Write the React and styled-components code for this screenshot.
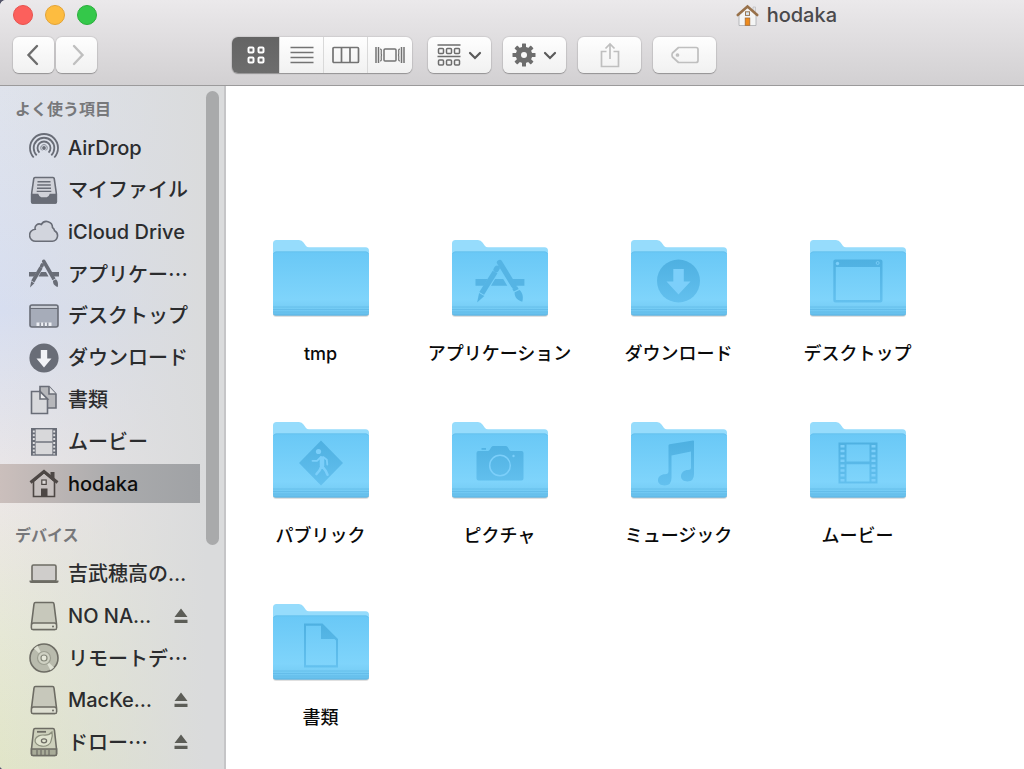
import React from "react";
import styled, { createGlobalStyle } from "styled-components";

const GlobalStyle = createGlobalStyle`
  * {
    box-sizing: border-box;
  }
  body {
    margin: 0;
    background: #55566a;
    font-family: Inter, "Noto Sans CJK JP", sans-serif;
    color: #1f2023;
  }
  svg {
    display: block;
    flex: none;
  }
`;

const Window = styled.div`
  min-height: 100vh;
  display: flex;
  flex-direction: column;
  border-radius: 6px 0 0 4px;
  overflow: hidden;
  background: #fff;
`;

const Header = styled.header`
  background: linear-gradient(to bottom, #ebe9eb, #d2d0d2);
  border-bottom: 1px solid #9b9a9b;
`;

const TitleBar = styled.div`
  display: flex;
  align-items: center;
  justify-content: space-between;
  height: 30px;
  padding: 0 187px 0 13px;
`;

const Lights = styled.div`
  display: flex;
  gap: 12px;
`;

const Light = styled.button`
  width: 20px;
  height: 20px;
  padding: 0;
  border-radius: 50%;
  border: 1px solid ${({ $edge }) => $edge};
  background: ${({ $color }) => $color};
`;

const Title = styled.h1`
  display: flex;
  align-items: center;
  gap: 8px;
  margin: 0;
  font-size: 20px;
  font-weight: 500;
  line-height: 30px;
  color: #4a494c;
`;

const Toolbar = styled.div`
  display: flex;
  align-items: center;
  gap: 12px;
  padding: 7px 13px 12px;
`;

const NavGroup = styled.div`
  display: flex;
  gap: 2px;
  margin-right: 123px;
`;

const ViewGroup = styled.div`
  display: flex;
  margin-right: 4px;
  border-radius: 6px;
  overflow: hidden;
  box-shadow: 0 0 1px 1px rgba(0, 0, 0, 0.08), 0 1px 1px rgba(0, 0, 0, 0.25);
`;

const ToolButton = styled.button`
  display: flex;
  align-items: center;
  justify-content: center;
  gap: 7px;
  width: ${({ $nav }) => ($nav ? "41px" : "63px")};
  height: 36px;
  padding: 0;
  border: 0;
  border-radius: 6px;
  background: linear-gradient(to bottom, #fefefe, #f1f1f1);
  box-shadow: 0 0 1px 1px rgba(0, 0, 0, 0.08), 0 1px 1px rgba(0, 0, 0, 0.25);
  color: ${({ disabled }) => (disabled ? "#bfbfbf" : "#6d6d6d")};
`;

const ViewButton = styled(ToolButton)`
  width: ${({ $active }) => ($active ? "48px" : "44px")};
  border-radius: 0;
  box-shadow: none;
  border-right: ${({ $last }) => ($last ? "0" : "1px solid #d9d9d9")};
  background: ${({ $active }) =>
    $active ? "linear-gradient(to bottom, #646464, #6d6d6d)" : "linear-gradient(to bottom, #fefefe, #f1f1f1)"};
  color: ${({ $active }) => ($active ? "#fff" : "#737373")};
`;

const Body = styled.div`
  display: flex;
  flex: 1;
`;

const Sidebar = styled.aside`
  display: flex;
  flex: none;
  border-right: 2px solid #c5c5c7;
  background: linear-gradient(to right, rgba(217, 218, 220, 0), #dadbdc 92%),
    linear-gradient(to bottom, #dfe3ec, #d7def0 33%, #ece7e6 60%, #e6e8d6 80%, #e1e5c8);
`;

const SideNav = styled.nav`
  display: flex;
  flex-direction: column;
  gap: 20px;
  width: 200px;
  padding-top: 11px;
`;

const SectionTitle = styled.h2`
  margin: 0;
  padding: 0 0 7px 15px;
  font-size: 16px;
  font-weight: 700;
  line-height: 24px;
  color: #77787b;
`;

const SideList = styled.ul`
  display: flex;
  flex-direction: column;
  gap: 3px;
  margin: 0;
  padding: 0;
  list-style: none;
`;

const SideRow = styled.li`
  display: flex;
  align-items: center;
  height: 39px;
  padding: 0 12px 0 29px;
  background: ${({ $selected }) => ($selected ? "linear-gradient(to right, #cbbfbc, #a9aaac 60%, #a0a2a5)" : "none")};
`;

const SideLink = styled.a`
  display: flex;
  flex: 1;
  align-items: center;
  gap: 9px;
  white-space: nowrap;
  text-decoration: none;
  font-family: ${({ $kana }) => ($kana ? '"Noto Sans CJK JP", Inter, sans-serif' : "inherit")};
  font-size: 20px;
  font-weight: 500;
  line-height: 30px;
  color: ${({ $selected }) => ($selected ? "#0d0d0d" : "#2b2c2e")};

  svg {
    color: ${({ $tone }) => $tone};
  }
`;

const EjectButton = styled.button`
  padding: 0;
  border: 0;
  background: none;
  color: #5c5d57;
`;

const ScrollTrack = styled.div`
  display: grid;
  grid-template-rows: 67fr 33fr;
  width: 24px;
  padding: 5px 5px 0 6px;
`;

const ScrollThumb = styled.div`
  border-radius: 7px;
  background: #a9aaab;
`;

const Files = styled.main`
  flex: 1;
  display: grid;
  grid-template-columns: repeat(auto-fill, 179px);
  align-content: start;
  row-gap: 55px;
  padding: 153px 0 20px 5px;
`;

const FileLink = styled.a`
  display: flex;
  flex-direction: column;
  align-items: center;
  gap: 21px;
  text-decoration: none;
  font-size: 18px;
  font-weight: 500;
  line-height: 24px;
  color: #0a0a0a;
`;

/* toolbar icons */

const Back = () => (
  <svg width="16" height="22" viewBox="0 0 16 22" fill="none" stroke="currentColor" strokeWidth="2.4" strokeLinecap="round">
    <path d="M11 2 2.500 11 11 20" />
  </svg>
);

const Forward = () => (
  <svg width="16" height="22" viewBox="0 0 16 22" fill="none" stroke="currentColor" strokeWidth="2.4" strokeLinecap="round">
    <path d="M5 2 13.500 11 5 20" />
  </svg>
);

const IconView = () => (
  <svg width="18" height="18" viewBox="0 0 18 18" fill="none" stroke="currentColor" strokeWidth="2">
    <rect x="1.500" y="1.500" width="5" height="5" rx="1" />
    <rect x="11.500" y="1.500" width="5" height="5" rx="1" />
    <rect x="1.500" y="11.500" width="5" height="5" rx="1" />
    <rect x="11.500" y="11.500" width="5" height="5" rx="1" />
  </svg>
);

const ListView = () => (
  <svg width="24" height="18" viewBox="0 0 24 18" stroke="currentColor" strokeWidth="1.600">
    <path d="M0.500 1.500h23M0.500 6.500h23M0.500 11.500h23M0.500 16.500h23" />
  </svg>
);

const ColumnView = () => (
  <svg width="28" height="18" viewBox="0 0 28 18" fill="none" stroke="currentColor" strokeWidth="1.700">
    <rect x="1" y="1.500" width="25.500" height="15" rx="1" />
    <path d="M9.500 1.500v15M18 1.500v15" />
  </svg>
);

const CoverView = () => (
  <svg width="30" height="18" viewBox="0 0 30 18" fill="none" stroke="currentColor" strokeWidth="1.500">
    <path d="M1 1v16M3.500 1v16M26.500 1v16M29 1v16" />
    <path d="M5 3c2.500 0 .5 3 1.500 6-1 3 1 6-1.500 6M25 3c-2.500 0-.5 3-1.500 6 1 3-1 6 1.500 6" strokeWidth="1.200" />
    <rect x="9" y="3" width="12" height="12" rx="1" />
  </svg>
);

const ArrangeIcon = () => (
  <svg width="24" height="23" viewBox="0 0 24 23" fill="none" stroke="currentColor" strokeWidth="1.500">
    <path d="M0.500 1h23M0.500 12.500h23" />
    {[1.5, 9.5, 17.5].map((x) => (
      <g key={x}>
        <rect x={x} y="4.500" width="5" height="5" rx="1" />
        <rect x={x} y="16" width="5" height="5" rx="1" />
      </g>
    ))}
  </svg>
);

const Chevron = () => (
  <svg width="14" height="9" viewBox="0 0 14 9" fill="none" stroke="#5a5a5a" strokeWidth="2.200" strokeLinecap="round">
    <path d="M2 2 7 7 12 2" />
  </svg>
);

const Gear = () => (
  <svg width="24" height="24" viewBox="0 0 24 24">
    <g fill="currentColor">
      {[0, 45, 90, 135].map((angle) => (
        <rect key={angle} x="10" y="0.500" width="4" height="23" rx="0.500" transform={`rotate(${angle} 12 12)`} />
      ))}
      <circle cx="12" cy="12" r="8.300" />
    </g>
    <circle cx="12" cy="12" r="3" fill="#f8f8f8" />
  </svg>
);

const ShareIcon = () => (
  <svg width="20" height="26" viewBox="0 0 20 26" fill="none" stroke="currentColor" strokeWidth="1.700">
    <path d="M6.500 9.500H1.500v15h17v-15H13.500M10 17V2M5.500 6.500 10 2l4.500 4.500" />
  </svg>
);

const TagIcon = () => (
  <svg width="28" height="18" viewBox="0 0 28 18" fill="none" stroke="currentColor" strokeWidth="1.700" strokeLinejoin="round">
    <path d="M7.500 1.500H25a2 2 0 0 1 2 2v11a2 2 0 0 1-2 2H7.500L1.500 11q-1-2 0-4z" />
    <circle cx="6.500" cy="9" r="1" />
  </svg>
);

const HomeColor = () => (
  <svg width="23" height="23" viewBox="0 0 23 23">
    <path d="M17 3h2.500v5L17 6z" fill="#e5e5e8" stroke="#b3b3b5" strokeWidth="0.600" />
    <path d="M3 10 11.500 2.500 20 10v11.500H3z" fill="#f4f5f5" stroke="#a9abae" strokeWidth="0.800" />
    <path d="M1.800 11 11.500 2.500 21.200 11" fill="none" stroke="#98714a" strokeWidth="2.600" strokeLinecap="round" />
    <rect x="9.500" y="7.800" width="4" height="3.600" fill="#dbe9f2" stroke="#987654" />
    <rect x="9.200" y="14" width="4.600" height="7.300" fill="#ee8a1b" stroke="#a66b34" strokeWidth="0.800" />
  </svg>
);

/* sidebar icons */

const SideSvg = ({ children }) => (
  <svg width="30" height="30" viewBox="0 0 30 30" fill="none" stroke="currentColor" strokeWidth="1.600">
    {children}
  </svg>
);

const AirDropIcon = () => (
  <SideSvg>
    <g strokeWidth="1.800">
      <path d="M4.700 24.500A14 14 0 1 1 25.300 24.500" />
      <path d="M7.700 22.300A10.300 10.300 0 1 1 22.300 22.300" />
      <path d="M10.400 19.600A6.500 6.500 0 1 1 19.600 19.600" />
      <path d="M13.200 17.500A3.200 3.200 0 1 1 16.800 17.500" strokeWidth="0.800" />
    </g>
    <circle cx="15" cy="15" r="1.900" fill="currentColor" stroke="none" />
  </SideSvg>
);

const AllFilesIcon = () => (
  <SideSvg>
    <path d="M6 2.500h18q1 0 1.200 1L27.300 18v9q0 1-1 1H3.700q-1 0-1-1v-9L4.800 3.500q.2-1 1.200-1z" fill="#d0d2d9" />
    <path d="M2.700 19.500h6q1 3.500 3.500 3.500h5.600q2.500 0 3.500-3.500h6V27q0 1-1 1H3.700q-1 0-1-1z" fill="currentColor" />
    <path d="M8.500 6.800h13M8.200 10h13.600M8 13.200h14M7.700 16.400h14.600" strokeWidth="1.400" />
  </SideSvg>
);

const CloudIcon = () => (
  <SideSvg>
    <path
      d="M7 24.300h16.300a5.600 5.600 0 0 0 2.300-10.500A4.700 4.700 0 0 0 23.500 10.500 6 6 0 0 0 12.300 7.500 4.200 4.200 0 0 0 6.200 12.300 6 6 0 0 0 7 24.300z"
      fill="#d2d5dd"
    />
  </SideSvg>
);

// ruler, pencil and brush crossed into an A
const AppGlyph = ({ fill, thickness }) => (
  <>
    <path d="M0 13h7.500l-2.500 4.500H0zM12 13h5l2.500 4.500H9.500zM22.500 13H30v4.500h-5z" fill={fill} stroke="none" />
    <path d="M13.200 6 12.700 7" stroke={fill} strokeWidth={thickness} strokeLinecap="round" />
    <path d="M12 8.500 3.800 22.500" stroke={fill} strokeWidth={thickness} />
    <path d="M2.200 22.300 5.400 24.200 1 28.500z" fill={fill} stroke="none" />
    <path d="M14.800 2.300 23.500 17.500" stroke={fill} strokeWidth={thickness} strokeLinecap="round" />
    <path d="M24 18.600 25 20.400" stroke={fill} strokeWidth={thickness} />
    <path d="M24 21.700 27 20.200C29.300 22.500 29.300 25.300 28.700 28 26.300 27 23.800 25.500 24 21.700z" fill={fill} stroke="none" />
  </>
);

const AppsIcon = () => (
  <SideSvg>
    <AppGlyph fill="currentColor" thickness={3.6} />
  </SideSvg>
);

const DesktopIcon = () => (
  <SideSvg>
    <rect x="1" y="4" width="28" height="22" rx="2" fill="#a6acb9" />
    <path d="M2 6h26" stroke="#d8dbe2" strokeWidth="1.300" />
    <path d="M1 7.500h28" strokeWidth="1" />
    <path d="M7.500 25V21.500h15V25z" fill="#eef0f5" stroke="none" />
    <path d="M11.300 21.500v4M15 21.500v4M18.700 21.500v4" stroke="#8c919d" />
  </SideSvg>
);

const DownloadIcon = () => (
  <SideSvg>
    <circle cx="15" cy="15" r="14.600" fill="currentColor" stroke="none" />
    <path d="M11.800 7h6.400v8.500h4.300L15 24.500 7.500 15.500h4.300z" fill="#f2f3f7" stroke="none" />
  </SideSvg>
);

const DocsIcon = () => (
  <SideSvg>
    <path d="M11 1.500h9l7 7.500v14H11z" fill="#b6b7bb" />
    <path d="M20 1.500V9h7" fill="#e1e2e5" />
    <path d="M2.500 6.500h8.500l7.500 7.500v14.500h-16z" fill="#d8d9dc" />
    <path d="M11 6.500V14h7.500z" fill="#eeeef0" />
  </SideSvg>
);

const FilmIcon = () => (
  <SideSvg>
    <rect x="2.700" y="1.700" width="24.600" height="26.300" fill="#d8d8da" strokeWidth="1.400" />
    <path d="M4.800 2v26M25.200 2v26" strokeWidth="3.600" />
    <path d="M4.800 3.500v24M25.200 3.500v24" stroke="#e0e0e2" strokeWidth="1.900" strokeDasharray="2 1.800" />
    <path d="M6.500 15h17" strokeWidth="1.400" />
  </SideSvg>
);

const HomeIcon = () => (
  <SideSvg>
    <path d="M21.500 3h4v8l-4-4z" fill="currentColor" stroke="none" />
    <path d="M4.500 12.500 15 3.500 25.500 12.500V27.500h-21z" fill="#c6c0bf" />
    <path d="M1.500 13.500 15 2.500 28.500 13.500" strokeWidth="3" />
    <rect x="12.800" y="11" width="4.400" height="4.400" fill="#ddd9d8" strokeWidth="1.200" />
    <path d="M12 19.500h6.500v8H12z" fill="currentColor" stroke="none" />
  </SideSvg>
);

const LaptopIcon = () => (
  <SideSvg>
    <rect x="3" y="6" width="24" height="16" rx="1.500" fill="#cfcdcb" />
    <path d="M0.500 21.500h29v1.500q-.5 1-2 1h-25q-1.500 0-2-1z" fill="currentColor" stroke="none" />
  </SideSvg>
);

const DriveIcon = () => (
  <SideSvg>
    <path d="M6.500 1.500h17q1.300 0 1.500 1.500L27.500 23v4q0 1.500-1.500 1.500H4Q2.500 28.500 2.500 27v-4L5 3q.2-1.500 1.500-1.500z" fill="#c7c8bb" />
    <path d="M2.500 24.500q0-2.500 2-2.500h21q2 0 2 2.500V27q0 1.500-1.500 1.500H4Q2.500 28.500 2.500 27z" fill="#dedfd2" strokeWidth="1.300" />
    <circle cx="24" cy="25.500" r="1" fill="currentColor" stroke="none" />
  </SideSvg>
);

const DiscIcon = () => (
  <SideSvg>
    <circle cx="15" cy="15" r="14" fill="#b9bbad" />
    <path d="M15 15 5 5.500 8.500 2.800zM15 15 25 24.500 21.500 27.200z" fill="#dfe1d4" stroke="none" />
    <circle cx="15" cy="15" r="6.500" fill="#cfd1c3" stroke="#9c9e90" strokeWidth="1.200" />
    <circle cx="15" cy="15" r="3" fill="#e6e8da" stroke="#85877a" strokeWidth="1.200" />
  </SideSvg>
);

const HardDiskIcon = () => (
  <SideSvg>
    <path d="M6 1.500h18q1.200 0 1.400 1.500l2.100 19v5q0 1.500-1.500 1.500H4Q2.500 28.500 2.500 27v-5L4.600 3Q4.800 1.500 6 1.500z" fill="#cdd0bb" />
    <path d="M2.500 22h25v5q0 1.500-1.500 1.500H4Q2.500 28.500 2.500 27z" fill="#a8ab98" />
    <path d="M8 23v5M12 23v5M16 23v5M20 23v5" strokeWidth="1.200" />
    <path d="M8 4.800h9" strokeWidth="1.800" />
    <path d="M23 5Q20.500 8 16 8.200A8 5.600 0 1 0 22 14Q24 9 23 5z" fill="#e0e3cf" stroke="#8b8e7c" strokeWidth="1.200" />
    <ellipse cx="15" cy="13.800" rx="2.600" ry="2" strokeWidth="1.300" />
  </SideSvg>
);

const Eject = () => (
  <svg width="14" height="16" viewBox="0 0 14 16" fill="currentColor">
    <path d="M7 0.500 13.500 9H0.500zM0.500 11.800h13v3.200H0.500z" />
  </svg>
);

/* folders */

const emblems = {
  apps: (
    <g transform="translate(24.500 20) scale(1.630 1.530)">
      <AppGlyph fill="#55b4e4" thickness={3.4} />
    </g>
  ),
  download: (
    <>
      <circle cx="48.500" cy="42" r="21.500" />
      <path d="M43.300 30h10.500v12.500H60.500L48.500 55.500 36.500 42.500h6.800z" fill="#7ccffa" />
    </>
  ),
  desktop: (
    <>
      <path fillRule="evenodd" d="M26.300 20.500h45.200a2 2 0 0 1 2 2v39a2 2 0 0 1-2 2h-45.200a2 2 0 0 1-2-2v-39a2 2 0 0 1 2-2zM26.800 28v33h44.200V28z" />
      <circle cx="28.500" cy="24.500" r="1.700" fill="#7ccffa" />
      <circle cx="68.700" cy="24" r="1.500" fill="none" stroke="#7ccffa" strokeWidth="0.800" />
    </>
  ),
  public: (
    <>
      <path d="M49 19.500 71 42 49 64.500 27 42z" />
      <g fill="none" stroke="#7ccffa" strokeLinecap="round" strokeLinejoin="round">
        <circle cx="46.500" cy="30.500" r="2.600" fill="#7ccffa" stroke="none" />
        <path d="M50 37.500v7" strokeWidth="4.500" />
        <path d="M49 36 45 39.800H40.500M51.500 36.200l3.300 2.500.5 5" strokeWidth="1.800" />
        <path d="M49.500 45 47.500 49.500 44.500 53M50.800 46l3 4 1.700 3.700" strokeWidth="2.600" />
      </g>
    </>
  ),
  pictures: (
    <>
      <path d="M27.500 30h9.500c2 0 3-5 5-5h13c2 0 3 5 5 5h10.500q2 0 2 2v25.500q0 2-2 2h-43q-2 0-2-2V32q0-2 2-2z" />
      <path d="M30.500 27h4.500v1.800h-4.500z" />
      <circle cx="49" cy="44.500" r="10.300" fill="none" stroke="#7ccffa" strokeWidth="1.500" />
      <circle cx="62.500" cy="35" r="1.200" fill="#7ccffa" />
    </>
  ),
  music: (
    <path d="M38.500 24.500q0-1 1-1.200L63 19.500q1-.2 1 .8V53q0 7.500-6.500 7.500c-4 0-6.500-2-6.500-5.200 0-3.600 3-6.300 7-6.300q3 0 3-2.500V30.500L41.500 34.500V57q0 7.500-7 7.500c-4 0-6.500-2-6.500-5.200 0-3.600 3-6 7-6q3.500 0 3.500-3z" />
  ),
  movies: (
    <>
      <path fillRule="evenodd" d="M29.500 21.500h39v41h-39zM37.500 23.500v17h23v-17zM37.500 43.300v17.200h23V43.300z" />
      <path d="M33.500 24v37M64.500 24v37" stroke="#7ccffa" strokeWidth="4" strokeDasharray="2.500 2.350" />
    </>
  ),
  docs: (
    <>
      <path fillRule="evenodd" d="M32 20.500h18.500L66 36V64.500H32zM34 22.700v39.600h30V37.500L49 22.700z" />
      <path d="M49 21.500V36h16z" />
    </>
  ),
};

function Folder({ emblem }) {
  return (
    <svg width="98" height="82" viewBox="0 0 98 82">
      <defs>
        <linearGradient id="folderFront" x1="0" y1="0" x2="0" y2="1">
          <stop offset="0" stopColor="#69c8f6" />
          <stop offset="0.75" stopColor="#7fd4fb" />
          <stop offset="0.85" stopColor="#79cff7" />
          <stop offset="1" stopColor="#69c1ee" />
        </linearGradient>
        <linearGradient id="folderEmblem" x1="0" y1="18" x2="0" y2="65" gradientUnits="userSpaceOnUse">
          <stop offset="0" stopColor="#4dafe0" />
          <stop offset="1" stopColor="#64c1ef" />
        </linearGradient>
      </defs>
      <rect x="1" y="72" width="96" height="6" rx="3" fill="#000" opacity="0.120" />
      <rect x="1" y="71" width="96" height="6" rx="3" fill="#3a83ad" opacity="0.400" />
      <path d="M1 70V4.500Q1 1 4.500 1H27q3 0 4.500 2.500L34 7q1 1.200 3 1.200h56.500Q97 8.200 97 11.700V70z" fill="#96dcfc" />
      <path d="M1 16q0-3.500 3.500-3.500h89Q97 12.500 97 16v57.500q0 3-3 3H4q-3 0-3-3z" fill="url(#folderFront)" />
      <path d="M1.500 15q.7-2.200 3-2.200h89q2.300 0 3 2.200" fill="none" stroke="#5fbbe9" strokeWidth="0.600" />
      <path d="M1 68h96M1 70.500h96M1 73h96M1.500 75.300h95" stroke="#55b1e0" strokeWidth="0.800" opacity="0.600" />
      {emblem && <g fill="url(#folderEmblem)">{emblems[emblem]}</g>}
    </svg>
  );
}

const favorites = [
  { name: "AirDrop", icon: AirDropIcon },
  { name: "マイファイル", icon: AllFilesIcon },
  { name: "iCloud Drive", icon: CloudIcon },
  { name: "アプリケー…", icon: AppsIcon, kana: true },
  { name: "デスクトップ", icon: DesktopIcon },
  { name: "ダウンロード", icon: DownloadIcon },
  { name: "書類", icon: DocsIcon },
  { name: "ムービー", icon: FilmIcon },
  { name: "hodaka", icon: HomeIcon, selected: true },
];

const devices = [
  { name: "吉武穂高の…", icon: LaptopIcon },
  { name: "NO NA…", icon: DriveIcon, eject: true },
  { name: "リモートデ…", icon: DiscIcon, kana: true },
  { name: "MacKe…", icon: DriveIcon, eject: true },
  { name: "ドロー…", icon: HardDiskIcon, eject: true, kana: true },
];

const folders = [
  { name: "tmp" },
  { name: "アプリケーション", emblem: "apps" },
  { name: "ダウンロード", emblem: "download" },
  { name: "デスクトップ", emblem: "desktop" },
  { name: "パブリック", emblem: "public" },
  { name: "ピクチャ", emblem: "pictures" },
  { name: "ミュージック", emblem: "music" },
  { name: "ムービー", emblem: "movies" },
  { name: "書類", emblem: "docs" },
];

function SideSection({ title, items, tone }) {
  return (
    <section>
      <SectionTitle>{title}</SectionTitle>
      <SideList>
        {items.map(({ name, icon: Icon, selected, eject, kana }) => (
          <SideRow key={name} $selected={selected}>
            <SideLink href="#" $kana={kana} $selected={selected} $tone={selected ? "#4d4745" : tone}>
              <Icon />
              {name}
            </SideLink>
            {eject && (
              <EjectButton aria-label={`${name} を取り出す`}>
                <Eject />
              </EjectButton>
            )}
          </SideRow>
        ))}
      </SideList>
    </section>
  );
}

function App() {
  return (
    <Window lang="ja">
      <GlobalStyle />
      <Header>
        <TitleBar>
          <Lights>
            <Light aria-label="閉じる" $color="#fc605c" $edge="#e6524e" />
            <Light aria-label="しまう" $color="#fdbc40" $edge="#e2a336" />
            <Light aria-label="拡大" $color="#34c84a" $edge="#2aae3c" />
          </Lights>
          <Title>
            <HomeColor />
            hodaka
          </Title>
        </TitleBar>
        <Toolbar>
          <NavGroup>
            <ToolButton $nav aria-label="戻る">
              <Back />
            </ToolButton>
            <ToolButton $nav disabled aria-label="進む">
              <Forward />
            </ToolButton>
          </NavGroup>
          <ViewGroup>
            <ViewButton $active aria-pressed="true" aria-label="アイコン">
              <IconView />
            </ViewButton>
            <ViewButton aria-label="リスト">
              <ListView />
            </ViewButton>
            <ViewButton aria-label="カラム">
              <ColumnView />
            </ViewButton>
            <ViewButton $last aria-label="Cover Flow">
              <CoverView />
            </ViewButton>
          </ViewGroup>
          <ToolButton aria-label="並べ替え">
            <ArrangeIcon />
            <Chevron />
          </ToolButton>
          <ToolButton aria-label="アクション">
            <Gear />
            <Chevron />
          </ToolButton>
          <ToolButton disabled aria-label="共有">
            <ShareIcon />
          </ToolButton>
          <ToolButton disabled aria-label="タグ">
            <TagIcon />
          </ToolButton>
        </Toolbar>
      </Header>
      <Body>
        <Sidebar>
          <SideNav>
            <SideSection title="よく使う項目" items={favorites} tone="#696d77" />
            <SideSection title="デバイス" items={devices} tone="#6d6c64" />
          </SideNav>
          <ScrollTrack>
            <ScrollThumb />
          </ScrollTrack>
        </Sidebar>
        <Files>
          {folders.map(({ name, emblem }) => (
            <FileLink key={name} href="#">
              <Folder emblem={emblem} />
              {name}
            </FileLink>
          ))}
        </Files>
      </Body>
    </Window>
  );
}

export default App;
